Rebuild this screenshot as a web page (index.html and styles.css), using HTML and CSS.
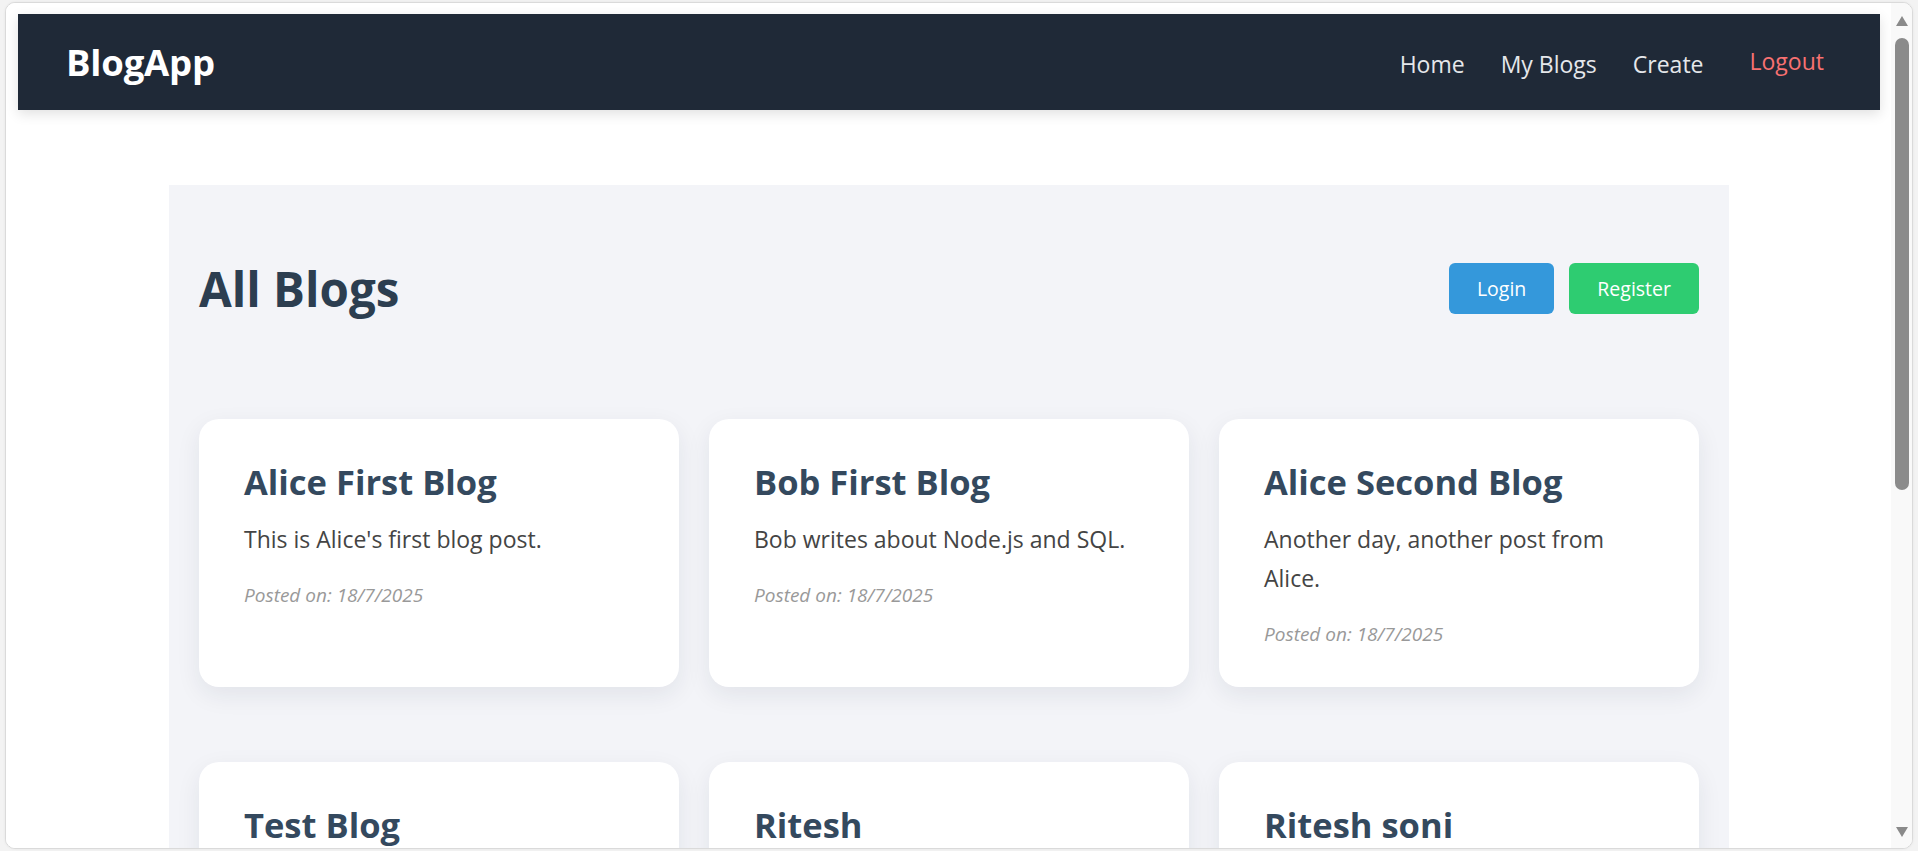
FILE: index.html
```html
<!DOCTYPE html>
<html lang="en">
<head>
<meta charset="utf-8">
<title>BlogApp</title>
<link rel="stylesheet" href="styles.css">
</head>
<body>
<div class="window">
  <div class="viewport">
    <nav class="navbar">
      <a class="brand" href="#">BlogApp</a>
      <div class="nav-links">
        <a class="nav-link" href="#">Home</a>
        <a class="nav-link" href="#">My Blogs</a>
        <a class="nav-link" href="#">Create</a>
        <button class="logout" type="button">Logout</button>
      </div>
    </nav>
    <main class="container">
      <header class="page-header">
        <h1 class="page-title">All Blogs</h1>
        <div class="auth-buttons">
          <a class="btn btn-login" href="#">Login</a>
          <a class="btn btn-register" href="#">Register</a>
        </div>
      </header>
      <section class="blog-grid">
        <article class="card">
          <h2 class="card-title">Alice First Blog</h2>
          <p class="card-text">This is Alice's first blog post.</p>
          <p class="card-date">Posted on: 18/7/2025</p>
        </article>
        <article class="card">
          <h2 class="card-title">Bob First Blog</h2>
          <p class="card-text">Bob writes about Node.js and SQL.</p>
          <p class="card-date">Posted on: 18/7/2025</p>
        </article>
        <article class="card">
          <h2 class="card-title">Alice Second Blog</h2>
          <p class="card-text">Another day, another post from Alice.</p>
          <p class="card-date">Posted on: 18/7/2025</p>
        </article>
        <article class="card">
          <h2 class="card-title">Test Blog</h2>
          <p class="card-text">This is a test blog.</p>
          <p class="card-date">Posted on: 18/7/2025</p>
        </article>
        <article class="card">
          <h2 class="card-title">Ritesh</h2>
          <p class="card-text">Hello from Ritesh.</p>
          <p class="card-date">Posted on: 18/7/2025</p>
        </article>
        <article class="card">
          <h2 class="card-title">Ritesh soni</h2>
          <p class="card-text">Another blog by Ritesh.</p>
          <p class="card-date">Posted on: 18/7/2025</p>
        </article>
      </section>
    </main>
  </div>
  <div class="scrollbar">
    <span class="arrow arrow-up"></span>
    <span class="thumb"></span>
    <span class="arrow arrow-down"></span>
  </div>
</div>
</body>
</html>
```
FILE: styles.css
```css
* {
  box-sizing: border-box;
}

html, body {
  margin: 0;
  padding: 0;
  height: 851px;
  overflow: hidden;
  background: #f3f3f3;
  font-family: "Open Sans", "Noto Sans", sans-serif;
}

.window {
  margin: 2px 5px 0 5px;
  height: 847px;
  border: 1px solid #dadada;
  border-radius: 10px;
  overflow: hidden;
  display: flex;
  background: #ffffff;
  box-shadow: 0 0 3px rgba(0, 0, 0, 0.06);
}

.viewport {
  flex: 1;
  min-width: 0;
  overflow: hidden;
  padding: 11px 11px 0 12px;
  background: #ffffff;
}

/* Navbar */
.navbar {
  height: 96px;
  background: #1f2937;
  display: flex;
  align-items: center;
  justify-content: space-between;
  padding: 0 56px 0 48px;
  box-shadow: 0 4px 12px rgba(0, 0, 0, 0.12);
}

.brand {
  color: #ffffff;
  font-weight: 700;
  font-size: 36.5px;
  text-decoration: none;
  letter-spacing: -0.2px;
}

.nav-links {
  display: flex;
  align-items: center;
  gap: 36px;
}

.nav-link {
  color: #e5e7eb;
  font-size: 23px;
  text-decoration: none;
  padding-top: 3px;
}

.logout {
  margin-left: 10px;
  background: none;
  border: none;
  padding: 0 0 3px 0;
  color: #f87171;
  font-family: inherit;
  font-size: 23px;
  cursor: pointer;
}

/* Container */
.container {
  width: 1560px;
  margin: 75px auto 0;
  background: #f3f4f8;
  padding: 30px 30px 60px;
}

.page-header {
  display: flex;
  align-items: center;
  justify-content: space-between;
  padding: 41px 0;
  margin-bottom: 57px;
}

.page-title {
  margin: 0;
  font-size: 47.5px;
  font-weight: 700;
  color: #2c3e50;
  line-height: normal;
}

.auth-buttons {
  display: flex;
  gap: 15px;
}

.btn {
  display: inline-block;
  color: #ffffff;
  text-decoration: none;
  font-size: 19.5px;
  padding: 12px 28px;
  border-radius: 6px;
  line-height: normal;
}

.btn-login {
  background: #3498db;
}

.btn-register {
  background: #2ecc71;
}

/* Cards */
.blog-grid {
  display: grid;
  grid-template-columns: repeat(3, 1fr);
  column-gap: 30px;
  row-gap: 75px;
}

.card {
  background: #ffffff;
  border-radius: 20px;
  padding: 38px 45px 39px;
  box-shadow: 0 8px 24px rgba(30, 40, 70, 0.08);
}

.card-title {
  margin: 0;
  font-size: 34.5px;
  font-weight: 700;
  color: #34495e;
  line-height: 49px;
}

.card-text {
  margin: 14px 0 0;
  font-size: 23px;
  line-height: 1.7;
  color: #444444;
}

.card-date {
  margin: 24px 0 0;
  font-size: 19px;
  font-style: italic;
  color: #999999;
  line-height: 25.5px;
}

/* Scrollbar */
.scrollbar {
  width: 21px;
  flex: none;
  background: #f9f9f9;
  display: flex;
  flex-direction: column;
  align-items: center;
  padding: 13px 0 11px;
}

.arrow {
  width: 0;
  height: 0;
  border-left: 6px solid transparent;
  border-right: 6px solid transparent;
}

.arrow-up {
  border-bottom: 10px solid #8a8a8a;
}

.arrow-down {
  margin-top: auto;
  border-top: 10px solid #8a8a8a;
}

.thumb {
  margin-top: 12px;
  width: 14px;
  height: 452px;
  border-radius: 7px;
  background: #8b8b8b;
}
```
